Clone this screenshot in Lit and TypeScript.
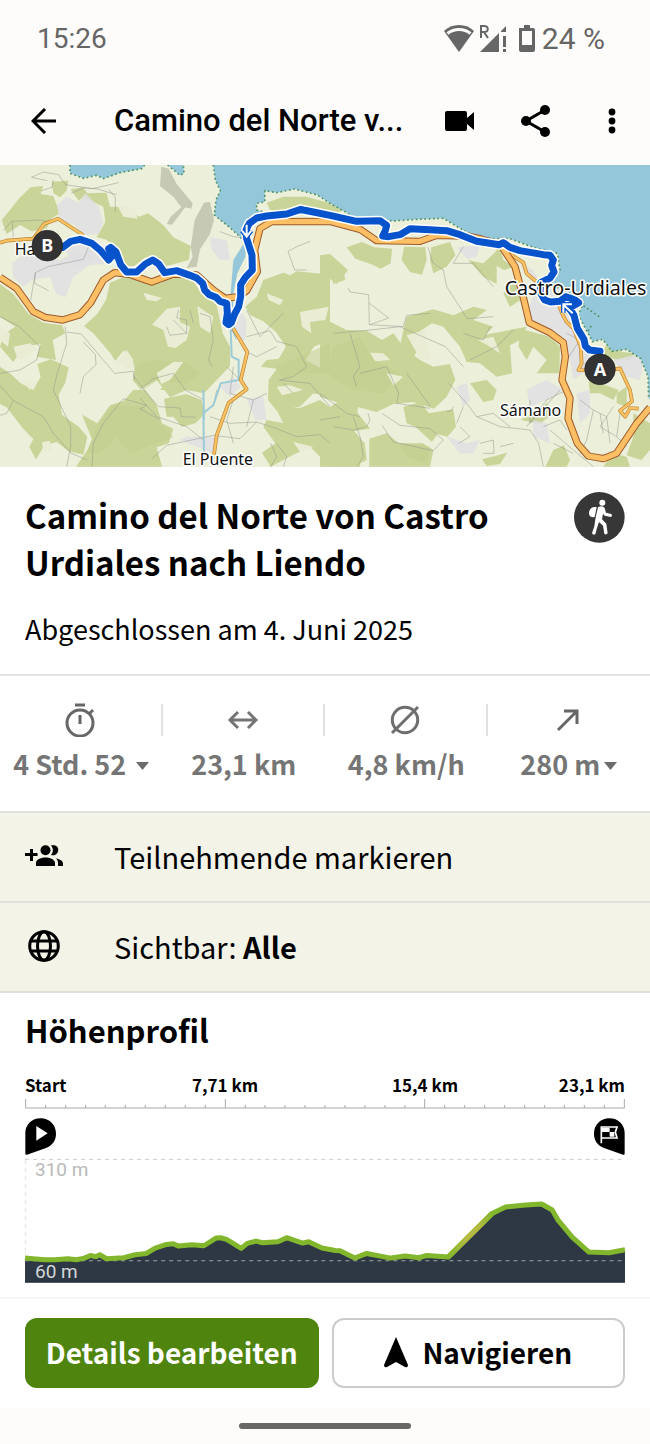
import { LitElement, html, svg, css } from "lit";
import { customElement, property } from "lit/decorators.js";

const FOREST = [
  "M30,150 55,118 92,82 130,78 122,102 160,108 180,160 152,176 140,205 95,214 60,195 20,222 5,180Z",
  "M155,65 205,62 200,92 180,112 160,100Z",
  "M212,88 250,82 262,100 320,98 330,140 372,140 418,170 445,160 490,196 520,232 572,258 566,300 500,318 440,290 402,318 372,318 350,262 316,238 290,232 316,186 310,140 250,112 236,122Z",
  "M330,368 370,352 480,370 520,350 575,355 600,395 650,435 668,520 690,560 690,618 642,668 612,700 560,690 510,712 470,660 420,686 398,660 405,620 372,570 346,602 330,578 280,520 252,498 292,462 318,420Z",
  "M0,372 40,402 86,462 130,488 186,496 196,520 158,540 168,600 110,590 122,552 70,560 40,606 0,560 12,522 46,500 0,470Z",
  "M112,612 152,598 206,622 196,668 176,704 186,764 236,800 262,830 250,884 206,874 170,846 134,856 108,898 88,860 100,838 66,802 20,742 0,732 0,620 30,640 60,668 100,690 122,650Z",
  "M246,764 292,790 330,736 372,722 400,690 436,690 470,736 486,790 520,806 506,850 470,862 486,920 228,920 262,870 276,838Z",
  "M492,716 560,702 604,720 616,760 586,790 546,800 520,770 500,770Z",
  "M526,640 560,608 600,614 620,650 600,690 560,672 500,690 480,690Z",
  "M790,360 850,338 870,346 890,334 950,340 990,344 990,540 942,560 916,600 990,640 990,710 940,700 900,740 830,752 804,720 806,660 830,626 782,620 800,600 836,596 858,560 828,516 790,484 752,466 736,440 770,410Z",
  "M826,742 900,744 960,720 990,742 1050,700 1080,690 1072,758 1110,806 1060,814 1090,850 1080,920 990,920 930,860 880,884 812,920 786,878 826,850 790,800 800,780 850,790Z",
  "M800,128 850,110 920,110 990,130 1030,150 1010,160 900,150 830,152 810,150Z",
  "M1040,262 1086,246 1122,262 1176,266 1172,310 1142,326 1118,314 1066,296Z",
  "M960,286 990,282 1028,316 1044,330 1010,372 990,356 960,356Z",
  "M990,330 1030,330 1036,360 1000,372Z",
  "M1212,260 1276,262 1280,300 1266,344 1230,336 1205,300Z",
  "M1294,262 1350,246 1366,286 1340,320 1300,340 1290,300Z",
  "M1404,300 1450,310 1480,282 1500,260 1510,300 1540,322 1512,330 1490,318 1490,372 1450,350Z",
  "M1530,376 1570,366 1562,420 1530,440 1510,400Z",
  "M1220,470 1300,448 1360,466 1420,440 1460,450 1420,480 1480,500 1456,524 1580,500 1560,540 1530,556 1536,640 1490,650 1440,610 1400,606 1380,560 1330,500 1296,490 1256,516 1262,560 1240,590 1200,560 1210,510Z",
  "M1560,506 1650,530 1680,560 1678,640 1610,640 1640,600 1600,560 1580,600 1556,560Z",
  "M960,470 1040,510 1100,512 1146,540 1180,520 1210,560 1260,600 1300,620 1350,612 1366,660 1340,710 1302,746 1240,726 1180,732 1130,756 1070,740 1020,730 960,710Z",
  "M1210,740 1264,726 1286,760 1360,748 1368,800 1342,830 1312,822 1296,846 1246,800 1220,790Z",
  "M960,790 990,790 1060,810 1094,850 1100,900 1060,920 960,920Z",
  "M1108,836 1160,820 1196,850 1268,850 1300,870 1290,920 1108,920Z",
  "M1410,670 1460,660 1490,690 1480,720 1450,726Z",
  "M1446,898 1486,888 1522,878 1500,912 1460,918Z",
  "M1562,780 1640,730 1660,760 1620,792Z",
  "M1660,870 1692,856 1710,900 1700,920 1636,920Z",
  "M1766,664 1800,670 1856,690 1840,720 1800,700 1770,700Z",
  "M1850,700 1880,680 1880,740 1850,730Z",
  "M1900,760 1950,790 1950,870 1924,900 1880,886 1900,830Z",
  "M1836,880 1880,890 1890,920 1810,920Z",
  "M1800,580 1830,545 1866,576 1906,580 1890,600 1850,600Z",
];

const DARK_FOREST = [
  "M340,736 430,740 490,800 520,830 440,860 390,880 350,830 300,880 262,880 290,800Z",
  "M400,620 460,600 560,610 600,640 560,670 470,662 430,690Z",
  "M830,620 990,550 990,640 900,640 850,660Z",
  "M1000,560 1080,530 1120,600 1200,640 1150,700 1060,690 980,640Z",
  "M1196,850 1290,860 1280,910 1220,890Z",
];

const CLEARING = [
  "M350,132 404,148 414,176 370,170Z",
  "M40,560 90,550 112,566 70,600 50,590Z",
  "M0,500 30,520 24,560 0,540Z",
  "M366,588 380,570 400,600 400,632 350,610Z",
  "M430,398 486,414 470,424 440,420Z",
  "M456,494 500,446 540,440 540,486 570,500 560,540 526,564 504,560 490,510Z",
  "M592,438 640,470 630,520 600,500Z",
  "M800,400 850,420 840,436 806,420Z",
  "M900,456 986,440 976,480 930,486 934,520 906,500Z",
  "M64,660 110,668 90,690Z",
  "M126,846 150,842 156,870 130,876Z",
  "M830,680 870,676 910,690 846,706Z",
  "M470,640 520,606 550,606 510,660 484,672Z",
  "M1220,526 1276,510 1280,560 1296,596 1262,600Z",
  "M1110,578 1150,580 1170,600 1126,604Z",
  "M1434,540 1480,530 1500,580 1470,560Z",
  "M1160,640 1210,650 1180,676Z",
  "M880,846 940,860 900,876Z",
];

const TOWN = [
  "M170,136 200,110 236,130 256,100 296,140 310,186 296,222 246,226 226,196 180,180Z",
  "M36,310 90,270 180,300 262,262 290,290 250,330 220,350 196,412 168,400 150,350 96,360 70,380 40,350Z",
  "M180,250 270,240 330,310 230,320Z",
  "M630,232 680,240 690,300 660,300 636,270Z",
  "M690,500 720,450 740,480 736,540 710,540Z",
  "M660,680 700,650 722,680 690,710Z",
  "M740,716 790,710 800,780 766,780Z",
  "M560,830 660,830 640,880 590,860 540,840Z",
  "M1580,470 1600,400 1680,380 1716,440 1740,520 1770,580 1760,630 1720,660 1700,540 1640,500Z",
  "M1560,310 1600,330 1620,370 1580,350Z",
  "M1370,262 1440,256 1430,290 1400,296Z",
  "M1840,600 1900,586 1930,600 1920,660 1880,650Z",
  "M1370,680 1400,670 1410,720 1390,740Z",
  "M1580,690 1640,660 1690,690 1640,720 1590,740Z",
  "M1340,830 1400,850 1440,840 1420,880 1380,880Z",
  "M1600,780 1640,790 1650,850 1600,830Z",
  "M1730,700 1770,690 1770,760 1740,790Z",
];

const ROCK = [
  "M484,20 506,26 530,72 578,130 574,146 556,142 516,194 500,192 512,170 544,142 520,110 480,78Z",
  "M612,128 630,126 642,180 630,222 600,268 590,320 560,324 578,290 572,260 584,180Z",
];

const SEA =
  "M640,15 646,60 661,92 648,120 643,165 690,203 726,236 746,196 792,156 770,150 770,130 794,126 795,92 830,98 884,87 952,105 990,130 1040,158 1060,172 1180,183 1250,178 1330,175 1385,208 1440,235 1530,236 1600,262 1672,280 1680,330 1650,372 1710,400 1750,430 1735,466 1778,545 1808,538 1836,574 1880,568 1922,596 1944,650 1946,715 1950,720 1950,15Z";

const PATHS = [
  "M95,52 130,36 176,44 196,74 278,86 356,68 M94,52 142,62",
  "M160,60 156,82 124,92 M214,100 250,84 288,86 350,104 M326,88 346,112 346,156",
  "M10,212 34,184 122,180 140,184 M36,184 40,230",
  "M92,420 106,338 144,320 250,298 266,260 M106,338 104,370 146,392",
  "M60,500 0,470 M58,500 120,560 110,600 60,630 0,640",
  "M196,500 200,550 172,640 160,690 212,800 212,860 200,920",
  "M200,516 244,522 330,624 344,640 400,634 404,660 M250,546 286,584 288,614 250,650 240,700",
  "M0,676 40,722 130,770 160,820 214,880 262,900 M40,722 20,760 0,766",
  "M276,920 280,850 310,790 370,716 440,736 420,746 480,780",
  "M400,646 440,700 476,740 540,744 544,770 588,772",
  "M420,690 460,656 520,640 556,690 612,720",
  "M420,714 470,770 560,800 610,840",
  "M536,450 530,474 560,480 560,520 510,526 500,500 M560,520 520,480",
  "M570,450 580,490 M600,460 630,470 640,540 626,600 636,620",
  "M740,450 780,530 850,460 M740,530 810,512 830,544 890,560 920,620 880,650 840,660",
  "M730,570 770,590 830,560 M700,620 690,700 760,720 800,700",
  "M456,896 500,856 640,826 720,836 770,786 830,806 890,830 960,824 990,850",
  "M700,720 680,780 700,850 M760,720 740,800 M630,770 690,790 770,786",
  "M812,850 830,890 812,920 M830,850 860,890 850,920",
  "M930,244 890,260 864,274 884,330 920,330",
  "M836,660 930,670 990,740 M850,670 880,700",
  "M1044,384 1050,396 1106,404 1108,494 1210,500 1220,466 1290,460 M1108,430 1166,474 1110,494",
  "M1000,520 1110,510 1200,500 1336,560 1390,620 M1050,520 1080,620 1060,650 1070,680",
  "M1284,262 1298,308 1330,330 1340,380 1402,476 1480,470 M1390,260 1360,310 1420,310 1480,380",
  "M1080,640 1160,620 1196,700 1190,730 1290,745 M1220,640 1290,738",
  "M960,700 1040,760 1080,770 M960,780 1020,770 M1060,770 1080,830 1090,890 1070,920",
  "M1146,796 1180,846 1300,872 1330,840 1290,806 1200,796 1146,760",
  "M1346,670 1400,730 1430,770 1500,800 1590,810 1616,850 1630,920 M1430,770 1480,760 1530,800",
  "M1590,720 1590,790 1680,690 M1580,800 1640,720 1700,690",
  "M1410,600 1490,560 1540,510 M1390,520 1450,540 1470,500",
  "M1360,740 1354,752 1340,754 M1390,740 1370,790 M1380,800 1410,830 1376,850",
  "M1440,850 1480,840 1482,880 1450,880 M1500,860 1540,850",
  "M1650,810 1720,870 1780,920 M1660,850 1720,880 M1630,800 1680,780 1700,810",
  "M1740,720 1780,750 1760,840 1740,880 M1780,750 1820,770 1830,850 M1840,740 1800,800 1850,830",
  "M1860,760 1850,830 1880,860 M1800,760 1810,820 M1700,520 1740,540 1700,600",
  "M660,215 700,230 740,235 M680,620 720,660 M650,690 640,740",
  "M1000,800 1060,810 1100,800 1110,780 1104,760",
];

const MAJOR = [
  "M0,352 50,385 100,455 135,472 188,480 240,464 272,428 310,360 344,338 392,344 455,366 520,342 590,345 640,390 675,415 715,410 740,392 772,335 764,270 780,205 815,185 990,184 1080,208 1130,242 1260,244 1310,226 1400,228 1440,236 1510,258",
  "M1508,264 1545,320 1570,412 1588,488 1650,518 1690,548 1696,590 1686,660 1710,715 1704,775 1732,850 1765,888 1810,896 1850,880 1910,790 1950,742",
];
const MINOR = [
  "M0,248 20,242 100,236 132,192 174,176 250,226",
  "M700,506 742,576 722,660 740,688 686,728 650,826 642,884",
  "M1515,262 1545,292 1570,308 1580,340 1610,366",
  "M1676,434 1686,460 1700,486 1720,505 1742,560 1745,610 1735,630 1790,632",
  "M1840,628 1860,625 1890,690 1896,724 1860,752 1876,770 1890,744 1916,746",
];

const ROUTE =
  "M1800,574 1768,570 1756,558 1752,538 1732,505 1722,466 1708,444 1736,428 1722,418 1696,410 1680,424 1652,426 1634,420 1620,396 1622,368 1650,354 1662,336 1655,316 1660,300 1650,286 1630,284 1560,272 1530,262 1510,248 1498,254 1430,244 1380,224 1340,212 1290,209 1230,206 1200,224 1166,230 1148,228 1156,212 1160,196 1140,182 1070,184 990,166 940,156 910,150 902,148 860,162 800,168 770,174 748,190 738,210 740,236 756,285 757,330 736,352 722,374 722,410 716,440 704,462 694,488 686,494 678,488 682,460 680,430 660,424 648,412 628,404 614,390 608,370 590,354 570,346 530,332 494,338 476,312 458,300 436,312 410,336 380,336 362,314 348,276 332,262 326,266 338,286 326,300 302,272 276,250 240,238 212,244 188,262";

// Elevation samples along the tour, in the profile's own units.
const PROFILE: [number, number][] = [
  [0, 177], [24, 179], [60, 182], [90, 182], [128, 179], [154, 182], [178, 177], [196, 169], [212, 173],
  [224, 167], [244, 179], [296, 176], [330, 167], [364, 163], [390, 147], [424, 136], [444, 134], [460, 141],
  [500, 137], [536, 140], [572, 117], [586, 116], [604, 121], [648, 148], [666, 133], [692, 126], [712, 131],
  [758, 128], [784, 116], [832, 132], [850, 128], [890, 147], [930, 154], [944, 155], [988, 177], [1024, 163],
  [1096, 177], [1140, 171], [1180, 176], [1204, 169], [1268, 174], [1370, 79], [1400, 43],
  [1440, 24], [1500, 18], [1548, 15], [1580, 33], [1598, 64], [1640, 114], [1690, 159], [1750, 161], [1798, 152],
];
const LINE = PROFILE.filter(([x]) => x < 1270 || x > 1390)
  .map(([x, y], i) => `${i ? "L" : "M"}${x},${y}`)
  .join(" ");
const CLIMB = "M1268,174 L1400,43";

@customElement("tour-map")
class TourMap extends LitElement {
  static styles = css`
    :host { display: block; }
    svg { display: block; width: 100%; height: auto; }
    .land { fill: #ecefd9; }
    .forest { fill: #c9d498; }
    .dark { fill: #c1cd8e; opacity: 0.5; }
    .clearing { fill: #eaedd4; }
    .town { fill: #dfdfe2; opacity: 0.85; }
    .rock { fill: #b9bda8; opacity: 0.75; }
    .water { fill: #95c7da; }
    .shore { fill: none; stroke: #4f9263; stroke-width: 5; stroke-dasharray: 5 8; }
    .river { fill: none; stroke: #9ccbd8; stroke-width: 6; }
    .path { fill: none; stroke: #8f968d; stroke-width: 2; opacity: 0.75; }
    .edge, .fill, .route, .halo { fill: none; stroke-linejoin: round; }
    .edge { stroke: #9c5a2a; stroke-width: 22; }
    .fill { stroke: #fdbf66; stroke-width: 16; }
    .edge.minor { stroke: #bd8432; stroke-width: 11; }
    .fill.minor { stroke: #fbc264; stroke-width: 7; }
    .halo { stroke: #fff; stroke-width: 30; stroke-linecap: round; }
    .route { stroke: #0753cb; stroke-width: 21; stroke-linecap: round; }
    .arrow { fill: none; stroke: #fff; stroke-width: 6; }
    .outline { stroke: #0753cb; stroke-width: 14; }
    .place { font-family: "Noto Sans", sans-serif; font-size: 48px; fill: #111; stroke: #fff; stroke-width: 9px; stroke-linejoin: round; paint-order: stroke; }
    .city { font-size: 59px; }
    .pin { fill: #333; stroke: #222; stroke-width: 2; }
    .letter { font: 700 54px "Noto Sans", sans-serif; fill: #fff; text-anchor: middle; }
  `;
  render() {
    const shapes = (list: string[], cls: string) => list.map((d) => svg`<path class=${cls} d=${d}></path>`);
    return html`<svg viewBox="0 15 1950 906" role="img" aria-label="Karte">
      <rect class="land" y="15" width="1950" height="906"></rect>
      ${shapes(FOREST, "forest")} ${shapes(DARK_FOREST, "dark")} ${shapes(CLEARING, "clearing")}
      ${shapes(TOWN, "town")} ${shapes(ROCK, "rock")}
      ${shapes(PATHS, "path")}
      <path class="river" d="M692,500 695,590 716,600 716,660 662,670 640,735 610,760 612,880 M610,690 612,780"></path>
      <path class="water" d="M728,256 700,300 692,400 690,500 708,540 704,480 698,410 712,340 736,290 738,250Z"></path>
      <path class="water" d=${SEA}></path>
      <path class="water" d="M210,15 210,40 250,55 290,46 310,56 360,38 425,26 434,15Z"></path>
      <path class="water" d="M503,15 540,46 552,40 550,15Z"></path>
      <path class="shore" d=${SEA.replace(" 1950,720 1950,15Z", "")}></path>
      <path class="shore" d="M210,15 210,40 250,55 290,46 310,56 360,38 425,26 434,15 M503,15 540,46 552,40 550,15 M1740,430 1798,470 M1774,498 1762,516"></path>
      ${shapes(MINOR, "edge minor")} ${shapes(MINOR, "fill minor")}
      ${shapes(MAJOR, "edge")} ${shapes(MAJOR, "fill")}
      <path class="halo" d=${ROUTE}></path>
      <path class="route" d=${ROUTE}></path>
      <path class="arrow outline" d="M740,194 740,228 M726,212 740,230 754,212"></path>
      <path class="arrow" d="M740,194 740,228 M726,212 740,230 754,212"></path>
      <path class="arrow outline" d="M1718,460 1690,434 M1690,458 1690,433 1716,433"></path>
      <path class="arrow" d="M1718,460 1690,434 M1690,458 1690,433 1716,433"></path>
      <text class="place city" x="1514" y="405">Castro-Urdiales</text>
      <text class="place" x="1500" y="768">Sámano</text>
      <text class="place" x="548" y="916">El Puente</text>
      <text class="place" x="44" y="284">Ha</text>
      <circle class="pin" cx="142" cy="257" r="46"></circle>
      <text class="letter" x="142" y="276">B</text>
      <circle class="pin" cx="1800" cy="628" r="46"></circle>
      <text class="letter" x="1800" y="647">A</text>
    </svg>`;
  }
}

@customElement("elevation-profile")
class ElevationProfile extends LitElement {
  static styles = css`
    :host { display: block; }
    svg { display: block; }
    .labels { display: grid; grid-template-columns: 1fr 2fr 2fr 1fr; font: 700 17px/28px "Noto Sans CJK JP", sans-serif; text-align: center; }
    .labels :first-child { text-align: left; }
    .labels :last-child { text-align: right; }
    .wide { width: 100%; height: auto; overflow: visible; }
    .axis { fill: none; stroke: #a9a9a9; stroke-width: 3; }
    .pins { display: flex; justify-content: space-between; padding-top: 9px; }
    .plot { display: grid; margin-top: 4px; }
    .plot > * { grid-area: 1 / 1; }
    .grid { fill: none; stroke: #d5d5d5; stroke-width: 4; stroke-dasharray: 12 12; }
    .side { stroke-width: 2; }
    .ground { fill: #2d3844; }
    .line { fill: none; stroke: #82b62c; stroke-width: 15; stroke-linejoin: round; }
    .climb { fill: none; stroke: url(#climb); stroke-width: 15; }
    .low { fill: none; stroke: #9aa2a0; stroke-width: 3; stroke-dasharray: 12 12; }
    .base { fill: none; stroke: #1c2733; stroke-width: 3; }
    .scale { display: flex; flex-direction: column; justify-content: space-between; padding-left: 10px; font: 400 19px/22px Roboto, sans-serif; color: #b9b9b9; }
    .scale :last-child { color: #d3d7da; }
  `;
  render() {
    const ticks = Array.from({ length: 31 }, (_, i) => {
      const x = Math.round(1 + i * 59.87);
      return `M${x},${i % 10 ? 18 : 0} V27`;
    }).join(" ");
    return html`
      <div class="labels"><span>Start</span><span>7,71 km</span><span>15,4 km</span><span>23,1 km</span></div>
      <svg class="wide" viewBox="0 0 1798 30" aria-hidden="true"><path class="axis" d="${ticks} M0,27 H1798"></path></svg>
      <div class="pins">
        <svg width="32" height="37" viewBox="0 0 96 111"><path d="M1,46 C1,20 20,1 47,1 C74,1 93,21 93,47 C93,68 82,81 65,89 L6,110 Q1,112 1,106Z"></path><path fill="#fff" d="M34,24 L68,46 L34,68Z"></path></svg>
        <svg width="32" height="37" viewBox="0 0 96 111"><path d="M95,46 C95,20 76,1 49,1 C22,1 3,21 3,47 C3,68 14,81 31,89 L90,110 Q95,112 95,106Z"></path><path fill="none" stroke="#fff" stroke-width="5" d="M25,76 V27 H72 L67,43 L72,60 H26"></path><path fill="#fff" d="M27,29 H50 V42 H27Z M50,42 H64 V56 H50Z"></path></svg>
      </div>
      <div class="plot">
        <svg class="wide" viewBox="0 -120 1798 372" role="img" aria-label="Höhenprofil">
          <defs><linearGradient id="climb" x1="0" y1="1" x2="1" y2="0"><stop offset="0" stop-color="#82b62c"></stop><stop offset=".4" stop-color="#b3ba42"></stop><stop offset=".7" stop-color="#b3ba42"></stop><stop offset="1" stop-color="#82b62c"></stop></linearGradient></defs>
          <path class="grid" d="M0,-119 H1798"></path>
          <path class="grid side" d="M1,-118 V170"></path>
          <path class="ground" d="${LINE} V250 H0Z"></path>
          <path class="low" d="M0,185 H1798"></path>
          <path class="line" d=${LINE}></path>
          <path class="climb" d=${CLIMB}></path>
          <path class="base" d="M0,249 H1798"></path>
        </svg>
        <div class="scale"><span>310 m</span><span>60 m</span></div>
      </div>`;
  }
}

@customElement("tour-stat")
class TourStat extends LitElement {
  @property() label = "";
  @property({ type: Boolean }) menu = false;
  static styles = css`
    :host { display: block; flex: 1; text-align: center; }
    .top { display: flex; justify-content: center; align-items: center; height: 32px; color: #666; border-right: 2px solid #e1e1e1; }
    :host(:last-of-type) .top { border-color: transparent; }
    .value { display: flex; align-items: center; justify-content: center; width: 100%; padding: 0; border: 0; background: none; color: #757575; font: 700 27px/40px "Noto Sans CJK JP", sans-serif; margin-top: 8px; white-space: pre; }
    .caret { flex: none; margin: 4px 0 0 4px; }
  `;
  render() {
    const caret = html`<svg class="caret" width="13" height="9" viewBox="0 0 13 9"><path fill="#6b6b6b" d="M0,0 H13 L6.5,8Z"></path></svg>`;
    return html`<div class="top"><slot></slot></div>
      ${this.menu ? html`<button class="value">${this.label}${caret}</button>` : html`<div class="value">${this.label}</div>`}`;
  }
}

@customElement("app-root")
class AppRoot extends LitElement {
  static styles = css`
    :host { display: flex; flex-direction: column; min-height: 100vh; background: #fff; color: #000; font-family: "Noto Sans CJK JP", "Noto Sans CJK SC", sans-serif; }
    svg { display: block; flex: none; }
    button { margin: 0; font-family: inherit; color: inherit; cursor: pointer; }
    header { background: #fdfcfa; }
    .status { display: flex; align-items: center; justify-content: space-between; padding: 0 45px 0 37px; height: 77px; color: #666; font: 400 28px/34px Roboto, sans-serif; }
    .signals { display: flex; align-items: center; gap: 6px; font-size: 30px; }
    .bar { display: flex; align-items: center; height: 88px; }
    .icon { display: flex; flex: none; align-items: center; justify-content: center; width: 76px; height: 76px; padding: 0; border: 0; background: none; }
    .back { width: 88px; margin-right: 26px; }
    .apptitle { flex: 1; min-width: 0; font: 500 31px/42px Roboto, sans-serif; white-space: nowrap; overflow: hidden; text-overflow: ellipsis; }
    .intro { display: grid; grid-template-columns: 1fr auto; column-gap: 60px; padding: 25px 25px 22px; border-bottom: 2px solid #e3e3e3; }
    h1 { margin: 0; font-size: 33px; line-height: 47px; font-weight: 700; }
    .date { margin: 20px 0 0; font-size: 27px; line-height: 46px; }
    .stats { display: flex; padding: 28px 0 27px; border-bottom: 2px solid #e1e1dc; }
    .row { display: flex; align-items: center; width: 100%; height: 90px; padding: 0 0 2px; border: 0; border-bottom: 2px solid #e1e1dc; background: #f3f3e7; font-size: 29px; line-height: 42px; text-align: left; }
    .rowicon { display: flex; justify-content: center; width: 88px; margin-right: 26px; }
    .profile { padding: 11px 25px 13px; }
    h2 { margin: 0 0 16px; font-size: 31px; line-height: 51px; font-weight: 700; }
    .actions { display: flex; gap: 13px; padding: 19px 25px 20px; margin-top: auto; border-top: 2px solid #f7f7f7; }
    .action { display: flex; flex: 1 1 0; align-items: center; justify-content: center; gap: 14px; height: 70px; padding: 0 0 2px; border: 2px solid #ccc; border-radius: 12px; background: #fff; font-size: 28px; line-height: 42px; font-weight: 700; white-space: nowrap; }
    .primary { border-color: #4f840e; background: #4f840e; color: #fff; }
    footer { display: flex; justify-content: center; padding: 15px 0; background: #fdfcfa; }
    .handle { width: 172px; height: 6px; border-radius: 3px; background: #696865; }
  `;
  render() {
    return html`
      <header>
        <div class="status">
          <span>15:26</span>
          <div class="signals">
            <svg width="92" height="30" viewBox="0 0 92 30" fill="#666" aria-hidden="true">
              <path d="M15,1 C9,1 4,3 0,7 L15,28 L30,7 C26,3 21,1 15,1Z"></path>
              <path fill="none" stroke="#fdfcfa" stroke-width="3" d="M3.500,9.500 C10,4 20,4 26.500,9.500"></path>
              <path d="M36,28 L55,9 V28Z M57,7 L62,2 V8 H57Z M59,12 H62 V23 H59Z M59,25 H62 V28 H59Z"></path>
              <path fill="none" stroke="#666" stroke-width="2" d="M37,14 V2 H40 C45,2 45,8 40,8 H37 M40,8 L44,14"></path>
              <path fill-rule="evenodd" d="M75,4 H80 V1 H86 V4 H89 Q91,4 91,6 V26 Q91,28 89,28 H77 Q75,28 75,26Z M78,7 V21 H88 V7Z"></path>
            </svg>
            <span>24 %</span>
          </div>
        </div>
        <div class="bar">
          <button class="icon back" aria-label="Zurück"><svg width="26" height="26" viewBox="0 0 26 26" fill="none" stroke="#000" stroke-width="3"><path d="M25,13 H3 M14,1 L2,13 L14,25"></path></svg></button>
          <div class="apptitle">Camino del Norte v...</div>
          <button class="icon" aria-label="Video"><svg width="30" height="20" viewBox="0 0 30 20"><path d="M2,0 H20 Q22,0 22,2 V7 L29,1 V19 L22,13 V18 Q22,20 20,20 H2 Q0,20 0,18 V2 Q0,0 2,0Z"></path></svg></button>
          <button class="icon" aria-label="Teilen"><svg width="30" height="32" viewBox="0 0 30 32"><path fill="none" stroke="#000" stroke-width="3" d="M24,5 L5,16 L24,27"></path><circle cx="24" cy="5" r="5"></circle><circle cx="5" cy="16" r="5"></circle><circle cx="24" cy="27" r="5"></circle></svg></button>
          <button class="icon" aria-label="Mehr"><svg width="8" height="26" viewBox="0 0 8 26"><circle cx="4" cy="4" r="3.400"></circle><circle cx="4" cy="13" r="3.400"></circle><circle cx="4" cy="22" r="3.400"></circle></svg></button>
        </div>
      </header>
      <tour-map></tour-map>
      <section class="intro">
        <h1>Camino del Norte von Castro Urdiales nach Liendo</h1>
        <svg width="51" height="51" viewBox="0 0 153 153" role="img" aria-label="Wandern">
          <circle cx="76" cy="76" r="76" fill="#373737"></circle>
          <g fill="#fff">
            <circle cx="85" cy="32" r="9"></circle>
            <path d="M68,46 C54,42 46,52 45,62 C44,72 52,77 62,75Z"></path>
            <path d="M72,46 C82,40 92,44 93,52 L96,62 L112,66 Q116,71 111,75 L92,71 L87,65 L84,82 L97,95 L101,124 Q96,130 91,125 L87,101 L75,90 L69,108 L64,127 Q57,130 54,124 L61,103 L65,76Z"></path>
          </g>
        </svg>
        <p class="date">Abgeschlossen am 4. Juni 2025</p>
      </section>
      <section class="stats">
        <tour-stat label="4 Std. 52 " menu><svg width="30" height="34" viewBox="0 0 30 34" fill="none" stroke="#666" stroke-width="3"><circle cx="15" cy="20" r="13"></circle><path d="M10,2 H20 M15,12 V21 M24,11 L28,7"></path></svg></tour-stat>
        <tour-stat label="23,1 km"><svg width="32" height="20" viewBox="0 0 32 20" fill="none" stroke="#757575" stroke-width="3"><path d="M3,10 H29 M11,2 L3,10 L11,18 M21,2 L29,10 L21,18"></path></svg></tour-stat>
        <tour-stat label="4,8 km/h"><svg width="30" height="30" viewBox="0 0 30 30" fill="none" stroke="#6e6e6e" stroke-width="3"><circle cx="15" cy="15" r="12.700"></circle><path d="M2,28 L28,2"></path></svg></tour-stat>
        <tour-stat label="280 m" menu><svg width="24" height="24" viewBox="0 0 24 24" fill="none" stroke="#666" stroke-width="3"><path d="M2,22 L21,3 M8,3 H21 V16"></path></svg></tour-stat>
      </section>
      <button class="row"><span class="rowicon"><svg width="38" height="22" viewBox="0 0 38 22"><path d="M5,4 H8 V8 H12.500 V11 H8 V16 H5 V11 H0 V8 H5Z"></path><circle cx="20.500" cy="5.300" r="5"></circle><path d="M11,21 V18 C11,14 17,12.500 20.500,12.500 C24,12.500 30,14 30,18 V21Z M26,0.500 C32,-0.500 34,3 33,6.500 C32,10 28,11 26,10 C28.500,7 28.500,3.500 26,0.500Z M31,13.500 C35,14 38,16 38,18.500 V21 H33 V18 C33,16 32.500,14.800 31,13.500Z"></path></svg></span><span>Teilnehmende markieren</span></button>
      <button class="row"><span class="rowicon"><svg width="32" height="32" viewBox="0 0 32 32" fill="none" stroke="#000" stroke-width="3"><circle cx="16" cy="16" r="14.300"></circle><ellipse cx="16" cy="16" rx="6.500" ry="14.300"></ellipse><path d="M3,11 H29 M3,21 H29"></path></svg></span><span>Sichtbar: <b>Alle</b></span></button>
      <section class="profile">
        <h2>Höhenprofil</h2>
        <elevation-profile></elevation-profile>
      </section>
      <div class="actions">
        <button class="action primary">Details bearbeiten</button>
        <button class="action"><svg width="24" height="31" viewBox="0 0 24 31"><path d="M12,0 L24,28 Q24,31 21,30 L12,25 L3,30 Q0,31 0,28Z"></path></svg>Navigieren</button>
      </div>
      <footer><div class="handle"></div></footer>`;
  }
}
